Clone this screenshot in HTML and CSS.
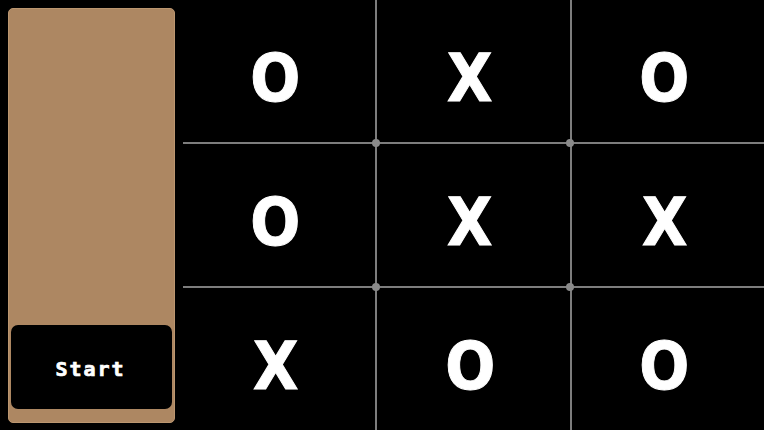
FILE: index.html
```html
<!DOCTYPE html>
<html>
<head>
<meta charset="utf-8">
<link rel="stylesheet" href="styles.css">
</head>
<body>
<div class="app">
  <aside class="panel">
    <button class="start">Start</button>
  </aside>
  <div class="board">
    <div class="cell"><span class="mark">O</span></div>
    <div class="cell"><span class="mark">X</span></div>
    <div class="cell"><span class="mark">O</span></div>
    <div class="cell"><span class="mark">O</span></div>
    <div class="cell"><span class="mark">X</span></div>
    <div class="cell"><span class="mark">X</span></div>
    <div class="cell"><span class="mark">X</span></div>
    <div class="cell"><span class="mark">O</span></div>
    <div class="cell"><span class="mark">O</span></div>
    <span class="dot d1"></span>
    <span class="dot d2"></span>
    <span class="dot d3"></span>
    <span class="dot d4"></span>
  </div>
</div>
</body>
</html>
```
FILE: styles.css
```css
html, body {
  margin: 0;
  padding: 0;
  background: #000;
  width: 764px;
  height: 430px;
  overflow: hidden;
}
.app {
  display: flex;
  height: 430px;
}
.panel {
  box-sizing: border-box;
  width: 167px;
  height: 415px;
  margin: 8px 0 0 8px;
  padding: 0 2px 13px 2px;
  background: #ad8762;
  border: 1px solid #bb9670;
  border-radius: 5px;
  display: flex;
  flex-direction: column;
  justify-content: flex-end;
}
.start {
  height: 84px;
  width: 100%;
  background: #000;
  color: #fff;
  border: none;
  border-radius: 7px;
  font-family: "DejaVu Sans Mono", monospace;
  font-weight: bold;
  font-size: 20px;
  letter-spacing: 2px;
  -webkit-text-stroke: 0.7px #fff;
  padding: 4px 2px 0 0;
  cursor: pointer;
}
.board {
  position: relative;
  margin-left: 8px;
  width: 581px;
  height: 430px;
  display: grid;
  grid-template-columns: repeat(3, 1fr);
  grid-template-rows: repeat(3, 1fr);
  gap: 2px;
  background: #7d7d7d;
}
.cell {
  background: #000;
  color: #fff;
  display: flex;
  align-items: center;
  justify-content: center;
  padding: 14px 7px 0 0;
}
.mark {
  display: inline-block;
  font-family: "DejaVu Sans", sans-serif;
  font-weight: bold;
  font-size: 64px;
  line-height: 1;
  -webkit-text-stroke: 1px #fff;
  transform: scale(0.92, 1.03);
}
.dot {
  position: absolute;
  width: 8px;
  height: 8px;
  border-radius: 50%;
  background: #8a8a8a;
}
.d1 { left: 189px; top: 139px; }
.d2 { left: 383px; top: 139px; }
.d3 { left: 189px; top: 283px; }
.d4 { left: 383px; top: 283px; }
```
